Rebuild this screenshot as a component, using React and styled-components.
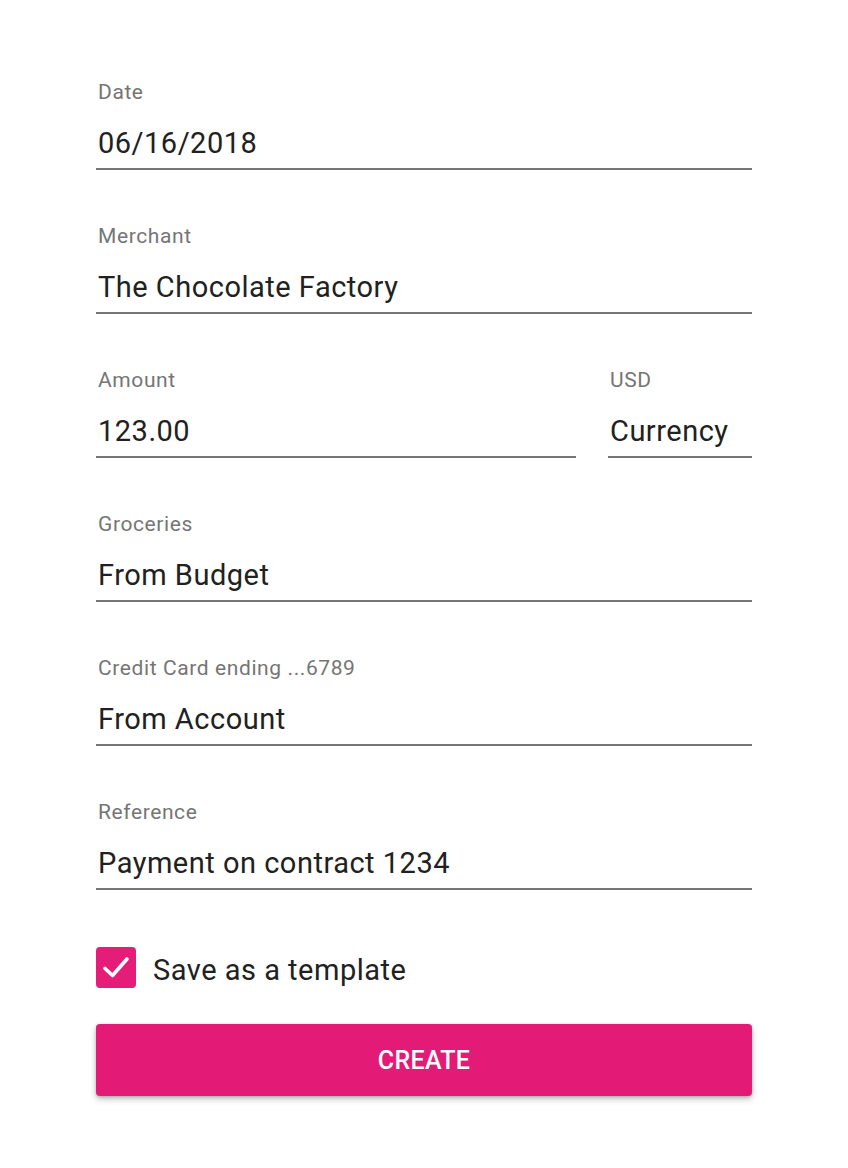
import React from "react";
import styled, { createGlobalStyle } from "styled-components";

const Global = createGlobalStyle`
  html, body { margin: 0; padding: 0; background: #ffffff; }
  body { font-family: Roboto, "Noto Sans", sans-serif; }
`;

const Page = styled.div`
  width: 848px;
  box-sizing: border-box;
  padding: 80px 96px 72px 96px;
`;

const Form = styled.form`
  display: flex;
  flex-direction: column;
  gap: 54px;
`;

const Row = styled.div`
  display: flex;
  gap: 32px;
`;

const Field = styled.div`
  display: flex;
  flex-direction: column;
  flex: ${(p) => (p.$width ? `0 0 ${p.$width}px` : "1 1 auto")};
  min-width: 0;
`;

const Label = styled.div`
  font-size: 21px;
  line-height: 24px;
  letter-spacing: 0.6px;
  color: #757575;
  padding-left: 2px;
  margin-bottom: 19px;
  white-space: nowrap;
`;

const Value = styled.div`
  font-size: 29px;
  line-height: 40px;
  letter-spacing: 0.5px;
  color: #212121;
  padding: 0 0 5px 2px;
  border-bottom: 2px solid #767676;
  white-space: nowrap;
`;

const CheckRow = styled.label`
  display: flex;
  align-items: center;
  gap: 17px;
  margin-top: 57px;
  font-size: 29px;
  letter-spacing: 0.5px;
  color: #212121;
`;

const Box = styled.span`
  width: 40px;
  height: 41px;
  border-radius: 4px;
  background: #e61c79;
  display: flex;
  flex: 0 0 auto;
`;

const Text = styled.span`
  padding-top: 4px;
`;

const Button = styled.button`
  display: block;
  margin-top: 36px;
  width: 100%;
  height: 72px;
  border: none;
  border-radius: 4px;
  background: #e31b77;
  color: #ffffff;
  font-family: Roboto, "Noto Sans", sans-serif;
  font-size: 25px;
  font-weight: 500;
  letter-spacing: 0.3px;
  box-shadow: 0 3px 6px rgba(0, 0, 0, 0.25), 0 1px 3px rgba(0, 0, 0, 0.15);
  cursor: pointer;
`;

const fields = [
  { label: "Date", value: "06/16/2018" },
  { label: "Merchant", value: "The Chocolate Factory" },
];
const fields2 = [
  { label: "Groceries", value: "From Budget" },
  { label: "Credit Card ending ...6789", value: "From Account" },
  { label: "Reference", value: "Payment on contract 1234" },
];

export default function App() {
  return (
    <Page>
      <Global />
      <Form onSubmit={(e) => e.preventDefault()}>
        {fields.map((f) => (
          <Field key={f.label}>
            <Label>{f.label}</Label>
            <Value>{f.value}</Value>
          </Field>
        ))}
        <Row>
          <Field>
            <Label>Amount</Label>
            <Value>123.00</Value>
          </Field>
          <Field $width={144}>
            <Label>USD</Label>
            <Value>Currency</Value>
          </Field>
        </Row>
        {fields2.map((f) => (
          <Field key={f.label}>
            <Label>{f.label}</Label>
            <Value>{f.value}</Value>
          </Field>
        ))}
      </Form>
      <CheckRow>
        <Box>
          <svg width="40" height="41" viewBox="0 0 40 41">
            <path d="M9 21.5 L16.5 28.5 L31 12" fill="none" stroke="#fff" strokeWidth="3.6" strokeLinecap="round" strokeLinejoin="round" />
          </svg>
        </Box>
        <Text>Save as a template</Text>
      </CheckRow>
      <Button type="button">CREATE</Button>
    </Page>
  );
}
